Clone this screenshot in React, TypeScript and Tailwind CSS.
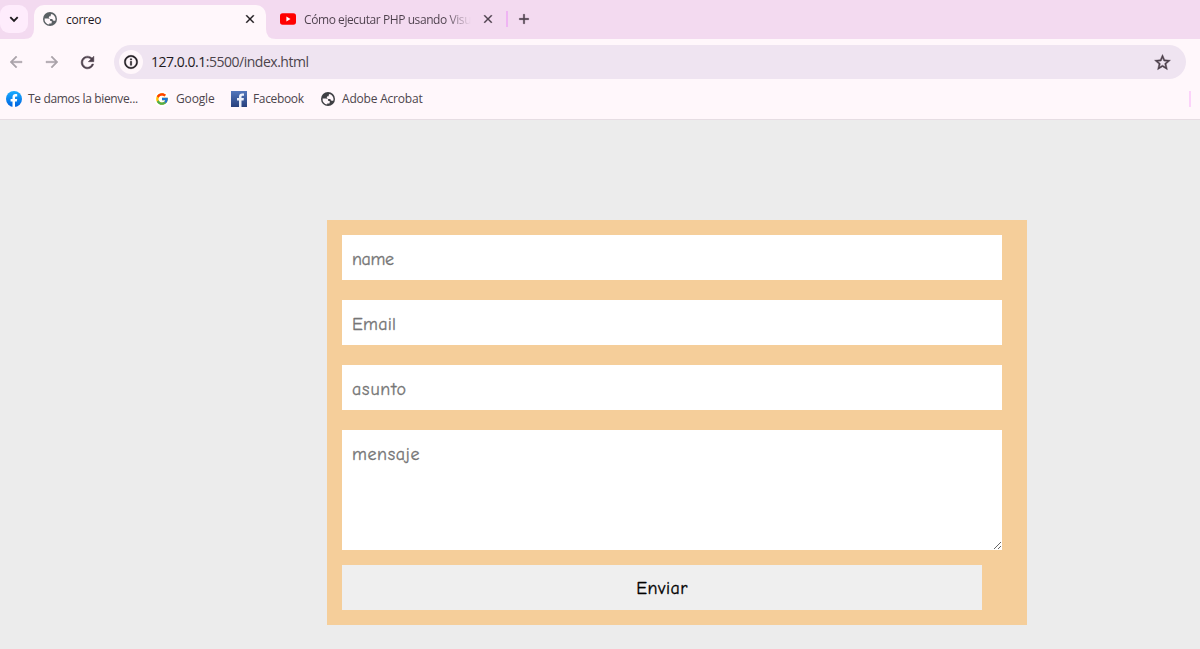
import React from 'react';
import { FcGoogle } from 'react-icons/fc';

const iconPaths = {
  back: 'M20 11H7.830l5.590-5.590L12 4l-8 8 8 8 1.410-1.410L7.830 13H20v-2z',
  forward: 'M12 4l-1.410 1.410L16.170 11H4v2h12.170l-5.580 5.590L12 20l8-8z',
  refresh:
    'M17.650 6.350C16.200 4.900 14.210 4 12 4c-4.420 0-7.990 3.580-7.990 8s3.570 8 7.990 8c3.730 0 6.840-2.550 7.730-6h-2.080c-.82 2.330-3.040 4-5.650 4-3.310 0-6-2.690-6-6s2.690-6 6-6c1.660 0 3.140.69 4.220 1.780L13 11h7V4l-2.350 2.350z',
  info: 'M11 7h2v2h-2zm0 4h2v6h-2zm1-9C6.480 2 2 6.480 2 12s4.480 10 10 10 10-4.480 10-10S17.520 2 12 2zm0 18c-4.410 0-8-3.590-8-8s3.590-8 8-8 8 3.590 8 8-3.590 8-8 8z',
  star: 'M22 9.240l-7.190-.62L12 2 9.190 8.630 2 9.240l5.460 4.730L5.820 21 12 17.270 18.180 21l-1.630-7.030L22 9.240zM12 15.400l-3.760 2.270 1-4.280-3.320-2.880 4.380-.38L12 6.100l1.710 4.040 4.380.38-3.320 2.880 1 4.280L12 15.400z',
  add: 'M19 13h-6v6h-2v-6H5v-2h6V5h2v6h6v2z',
  close:
    'M19 6.410L17.590 5 12 10.590 6.410 5 5 6.410 10.590 12 5 17.590 6.410 19 12 13.410 17.590 19 19 17.590 13.410 12z',
};

function Icon({ name, className }: { name: keyof typeof iconPaths; className: string }) {
  return (
    <svg viewBox="0 0 24 24" fill="currentColor" stroke="currentColor" strokeWidth="0.6" className={className}>
      <path d={iconPaths[name]} />
    </svg>
  );
}

function Globe({ color }: { color: string }) {
  return (
    <svg className="size-4 shrink-0" viewBox="0 0 16 16">
      <circle cx="8" cy="8" r="7" fill={color} />
      <path
        d="M2.6 7.4H6c1.5 0 2.2.7 2.2 1.8v.7h1.5v1.5c0 .8-.5 1.2-1.3 1.2H7.2v1A5.5 5.5 0 0 1 2.6 7.4ZM9.6 2.9C12 3.6 13.5 5.700 13.500 8c0 .6-.1 1.200-.3 1.700h-1.500c-.8 0-1.200-.5-1.200-1.200V7.900H8.400C7.400 7.900 6.800 7.300 6.800 6.500S7.400 5.200 8.200 5.200h.5V4.200c0-.7.300-1.100.9-1.300Z"
        fill="#fff7fb"
      />
    </svg>
  );
}

function FacebookRound() {
  return (
    <svg className="size-4 shrink-0" viewBox="0 0 16 16">
      <defs>
        <linearGradient id="fbRound" x1="0" y1="0" x2="0" y2="1">
          <stop offset="0" stopColor="#19adff" />
          <stop offset="1" stopColor="#0062e0" />
        </linearGradient>
      </defs>
      <circle cx="8" cy="8" r="8" fill="url(#fbRound)" />
      <path d="M6.500 15.900V10.500H4.600V8h1.900V6.300c0-2.100 1.200-3.200 3.100-3.200.6 0 1.100.1 1.600.2v2.100h-1c-.9 0-1.200.5-1.200 1.200V8h2.200l-.4 2.500H9v5.400a8 8 0 0 1-2.500 0Z" fill="#fff" />
    </svg>
  );
}

function FacebookSquare() {
  return (
    <svg className="size-4 shrink-0" viewBox="0 0 16 16">
      <defs>
        <linearGradient id="fbSquare" x1="0" y1="0" x2="0" y2="1">
          <stop offset="0" stopColor="#5478bd" />
          <stop offset="1" stopColor="#263f7c" />
        </linearGradient>
      </defs>
      <path d="M0 0h16v16H0z" fill="url(#fbSquare)" />
      <path d="M8 16V9.400H6V7.100h2V5.600C8 3.500 9.200 2.400 11.200 2.400c.8 0 1.500.1 1.800.1v2.200h-1.200c-1 0-1.300.5-1.300 1.200v1.200h2.400l-.3 2.300h-2.100V16Z" fill="#edf1fa" />
    </svg>
  );
}

function YouTube() {
  return (
    <svg className="h-3 w-4 shrink-0" viewBox="0 0 16 12">
      <rect y="0.300" width="16" height="11.400" rx="2.600" fill="#f00" />
      <path d="M6.400 3.600v4.800L10.500 6Z" fill="#fff" />
    </svg>
  );
}

function TabStrip() {
  return (
    <div className="flex h-[39px] bg-[#f3daf0]">
      <button className="mt-[5px] flex h-7 w-7 items-center justify-center rounded-[9px] bg-[#feecfc]">
        <svg className="size-[10px]" viewBox="0 0 10 10" fill="none" stroke="#1e1a1e" strokeWidth="1.900">
          <path d="M1.300 3.200 5 6.900l3.700-3.700" />
        </svg>
      </button>
      <svg className="mt-[29px] -ml-1 h-[10px] w-[10px]" viewBox="0 0 10 10">
        <path d="M10 0v10H0Q10 10 10 0Z" fill="#fff7fb" />
      </svg>
      <div className="mt-[5px] flex h-[34px] w-[232px] items-center rounded-t-[10px] bg-[#fff7fb] pr-[9px] pb-[6px] pl-2">
        <Globe color="#5a6064" />
        <span className="mt-[2px] ml-2 text-[12px] tracking-[-0.250px] text-[#1e1a1e]">correo</span>
        <Icon name="close" className="ml-auto size-[14px] text-[#1e1a1e]" />
      </div>
      <svg className="mt-[29px] h-[10px] w-[10px]" viewBox="0 0 10 10">
        <path d="M0 0v10h10Q0 10 0 0Z" fill="#fff7fb" />
      </svg>
      <div className="ml-1 flex h-[38px] items-center">
        <YouTube />
        <span className="mt-[2px] ml-2 w-[167px] bg-linear-to-r from-[#4c3f4b] from-85% to-transparent bg-clip-text text-[12px] tracking-[-0.420px] whitespace-nowrap text-transparent">
          Cómo ejecutar PHP usando Visu
        </span>
        <Icon name="close" className="ml-[10px] size-[14px] text-[#4c3f4b]" />
        <div className="ml-[11px] h-4 w-[2px] bg-[#efb5f3]" />
        <Icon name="add" className="ml-2 size-4 text-[#4c3f4b]" />
      </div>
    </div>
  );
}

function Toolbar() {
  return (
    <div className="flex h-[46px] items-center pr-[14px] pl-[7px]">
      <Icon name="back" className="size-[18px] text-[#aaa3a9]" />
      <Icon name="forward" className="ml-[18px] size-[18px] text-[#aaa3a9]" />
      <Icon name="refresh" className="ml-[17px] size-[19px] text-[#4c3f4b]" />
      <div className="ml-[17px] flex h-[34px] flex-1 items-center rounded-full bg-[#efe4f1] pr-[14px] pl-[5px]">
        <div className="flex size-6 items-center justify-center rounded-full bg-[#fff7fb]">
          <Icon name="info" className="size-4 text-[#1e1a1e]" />
        </div>
        <span className="mb-px ml-2 text-[14px] tracking-[-0.480px] text-[#4c454c]">
          <span className="text-[#1e1a1e]">127.0.0.1</span>:5500/index.html
        </span>
        <Icon name="star" className="ml-auto size-[19px] text-[#4c3f4b]" />
      </div>
    </div>
  );
}

function Bookmarks() {
  return (
    <div className="flex h-[35px] items-center border-b border-[#e6dde3] pr-[9px] pb-[6px] pl-[6px] text-[12px] text-[#4c454c]">
      <FacebookRound />
      <span className="ml-[6px] w-[112px] tracking-[-0.350px] whitespace-nowrap">Te damos la bienve...</span>
      <div className="ml-[14px] flex size-4 items-center justify-center rounded-full bg-white">
        <FcGoogle className="size-[14px]" />
      </div>
      <span className="ml-[6px] w-[41px] tracking-[-0.150px]">Google</span>
      <span className="ml-[14px] flex"><FacebookSquare /></span>
      <span className="ml-[6px] w-[53px] tracking-[-0.350px]">Facebook</span>
      <span className="ml-[14px] flex"><Globe color="#3e3f43" /></span>
      <span className="ml-[6px] tracking-[-0.200px] whitespace-nowrap">Adobe Acrobat</span>
      <div className="ml-auto h-4 w-[2px] bg-[#fcd3fa]" />
    </div>
  );
}

const field =
  'block w-[660px] bg-white px-[10px] text-[18px] outline-none placeholder:text-[#757575] [-webkit-text-stroke:0.300px_#757575]';

export default function App() {
  return (
    <div className="flex h-[649px] w-[1200px] flex-col overflow-hidden bg-[#ececec] font-['Open_Sans',sans-serif]">
      <header className="h-[120px] shrink-0 bg-[#fff7fb]">
        <TabStrip />
        <Toolbar />
        <Bookmarks />
      </header>
      <main className="pt-[100px] pl-[327px]">
        <form className="h-[405px] w-[700px] bg-[#f5ce9a] p-[15px] font-['Comic_Sans_MS','Comic_Neue','Open_Sans',sans-serif]" onSubmit={(e) => e.preventDefault()}>
          <input className={`${field} mb-5 h-[45px] pt-[3px] tracking-[-0.400px]`} placeholder="name" />
          <input className={`${field} mb-5 h-[45px] pt-[3px] tracking-[0.250px]`} placeholder="Email" />
          <input className={`${field} mb-5 h-[45px] pt-[3px] tracking-[0.800px]`} placeholder="asunto" />
          <textarea className={`${field} mb-[15px] h-[120px] resize pt-[12px] leading-[25px] tracking-[0.600px]`} placeholder="mensaje" />
          <button className="h-[45px] w-[640px] bg-[#efefef] pt-[2px] text-[18px] tracking-[0.450px] text-black [-webkit-text-stroke:0.300px_#000]">Enviar</button>
        </form>
      </main>
    </div>
  );
}
